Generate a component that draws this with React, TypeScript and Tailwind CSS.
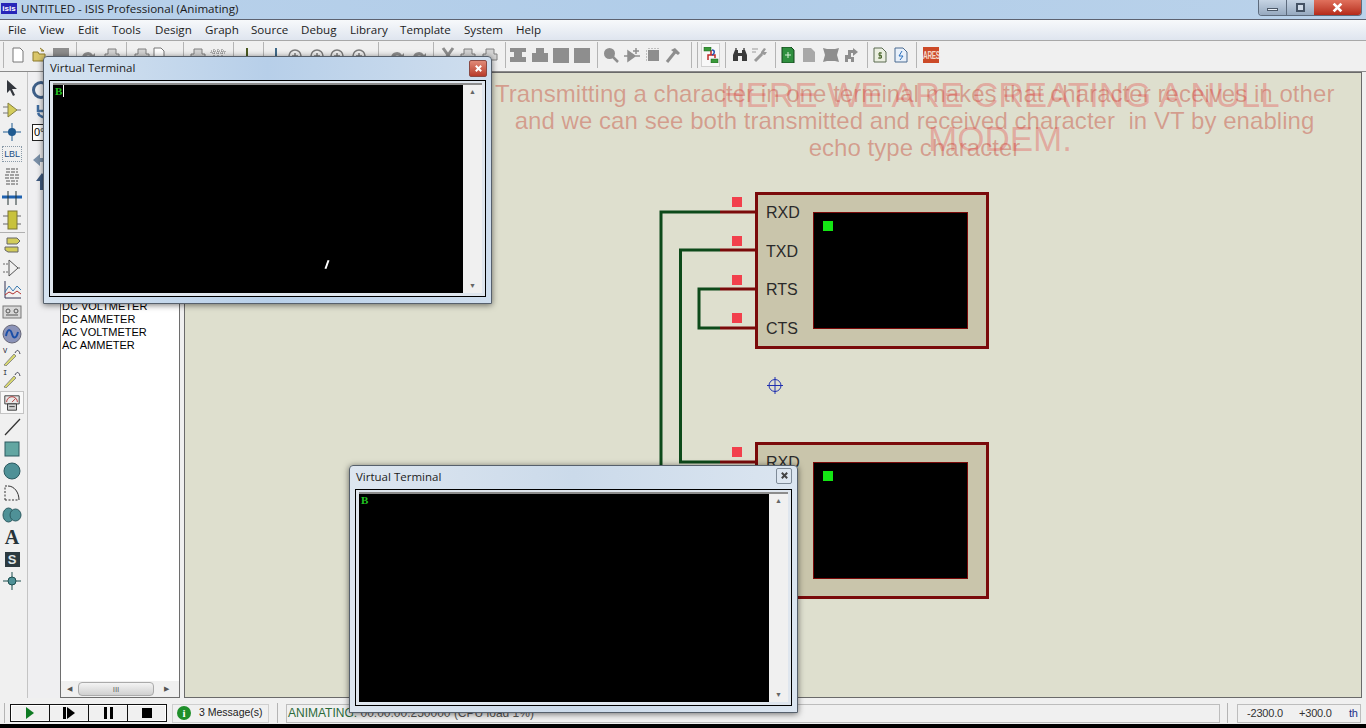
import React from 'react';

const menus: [string, string][] = [
  ['File', 'w-[31px]'],
  ['View', 'w-[39px]'],
  ['Edit', 'w-[34px]'],
  ['Tools', 'w-[43px]'],
  ['Design', 'w-[50px]'],
  ['Graph', 'w-[46px]'],
  ['Source', 'w-[50px]'],
  ['Debug', 'w-[49px]'],
  ['Library', 'w-[50px]'],
  ['Template', 'w-[64px]'],
  ['System', 'w-[52px]'],
  ['Help', 'w-[30px]'],
];

const Ico: React.FC<{ className?: string; children: React.ReactNode }> = ({ className = '', children }) => (
  <svg viewBox="0 0 16 16" className={`w-4 h-4 shrink-0 ${className}`}>
    {children}
  </svg>
);

const Sep: React.FC<{ className: string }> = ({ className }) => (
  <div className={`w-px h-[26px] shrink-0 bg-[#b4b4b4] ${className}`} />
);

const G = '#8e8e8e';

// small gray toolbar drawings
const Doc = () => <path d="M3 1h7l3 3v11H3z" fill="#fff" stroke="#777" />;
const Open = () => <path d="M1 5h5l1 2h6v7H1zM8 1l4 3h-3" fill="#d9c66a" stroke="#8c7a2c" />;
const Block = () => <rect x="0" y="1" width="16" height="15" fill={G} />;
const Ring = () => (
  <g fill="none" stroke="#7d7d7d" strokeWidth="1.5">
    <circle cx="8" cy="9" r="6" />
    <path d="M5 9h6M8 6v6" />
  </g>
);
const Swoosh = () => <path d="M2 10a6 6 0 0 1 11-2l2-2v6H9l2-2a4 4 0 0 0-7 2z" fill={G} />;
const Print = () => <path d="M4 2h8v5h3v6H1V7h3z" fill="#d4d4d4" stroke="#808080" />;
const Align1 = () => <path d="M0 1h16v4h-4v5h4v5H0v-5h4V5H0z" fill={G} />;
const Align2 = () => <path d="M4 1h8v5h4v9H0V6h4z" fill={G} />;

const TopTools: React.FC = () => (
  <div className="h-[31px] shrink-0 bg-[#f0f0f0] border-b border-[#8a8a8a] flex items-center pb-[2px]">
    <Sep className="ml-[3px]" />
    <Ico className="ml-[6px]"><Doc /></Ico>
    <Ico className="ml-[6px]"><Open /></Ico>
    <Ico className="ml-[5px]"><Block /></Ico>
    <Sep className="ml-[7px]" />
    <Ico className="ml-[3px]"><Swoosh /></Ico>
    <Ico className="ml-[8px]"><Print /></Ico>
    <Sep className="ml-[6px]" />
    <Ico className="ml-[7px]"><Print /></Ico>
    <Ico className="ml-[1px]"><Doc /></Ico>
    <Sep className="ml-[16px]" />
    <Ico className="ml-[6px]"><Print /></Ico>
    <Ico className="ml-[4px]"><path d="M1 4h14v2H1zM1 10h14v2H1zM4 2v12M8 2v12M12 2v12" stroke="#777" fill="none" strokeDasharray="1 1" /></Ico>
    <Sep className="ml-[7px]" />
    <Ico className="ml-[5px]"><path d="M8 1v9M2 10h12M1 14h14" stroke="#4a5a20" strokeWidth="2" fill="none" /></Ico>
    <Sep className="ml-[8px]" />
    <Ico className="ml-[4px]"><path d="M8 1v9M2 10h12M1 14h14" stroke="#3f6a8a" strokeWidth="2" fill="none" /></Ico>
    <Ico className="ml-[3px]"><Ring /></Ico>
    <Ico className="ml-[6px]"><Ring /></Ico>
    <Ico className="ml-[4px]"><Ring /></Ico>
    <Ico className="ml-[6px]"><Ring /></Ico>
    <Sep className="ml-[11px]" />
    <Ico className="ml-[10px]"><Swoosh /></Ico>
    <Ico className="ml-[6px]"><Swoosh /></Ico>
    <Sep className="ml-[6px]" />
    <Ico className="ml-[6px]"><path d="M3 1l10 14M13 1L3 15" stroke={G} strokeWidth="3" /></Ico>
    <Ico className="ml-[4px]"><Print /></Ico>
    <Ico className="ml-[6px]"><Print /></Ico>
    <Sep className="ml-[7px]" />
    <Ico className="ml-[4px]"><Align1 /></Ico>
    <Ico className="ml-[6px]"><Align2 /></Ico>
    <Ico className="ml-[5px]"><Block /></Ico>
    <Ico className="ml-[5px]"><Block /></Ico>
    <Sep className="ml-[7px]" />
    <Ico className="ml-[5px]">
      <circle cx="6.5" cy="6.5" r="5.5" fill={G} />
      <path d="M10 10l5 5" stroke={G} strokeWidth="2.5" />
    </Ico>
    <Ico className="ml-[5px]">
      <path d="M0 9h4M11 9h5M4 4l7 5-7 5zM12 1v6M9 4h6" stroke={G} strokeWidth="1.5" fill={G} />
    </Ico>
    <Ico className="ml-[5px]">
      <path d="M3 3h11v11H3z" fill={G} />
      <path d="M1 4h14M1 7h14M1 10h14M1 13h14M4 1v14M7 1v14M10 1v14M13 1v14" stroke={G} strokeDasharray="1 1" />
    </Ico>
    <Ico className="ml-[4px]">
      <path d="M2 15L10 5" stroke={G} strokeWidth="3" />
      <path d="M6 3l4-2 5 5-2 2-3-2z" fill={G} />
    </Ico>
    <Sep className="ml-[10px]" />
    <Sep className="ml-[5px]" />
    <div className="ml-[3px] w-[19px] h-[24px] shrink-0 flex items-center justify-center border border-[#d0d0d0] bg-[#f8f8f8]">
      <Ico>
        <path d="M8 3v5H5v5M8 8h4v3" stroke="#c02828" strokeWidth="1.5" fill="none" />
        <path d="M9 3c3 0 3 4 0 5" stroke="#2050b0" strokeWidth="1.5" fill="none" />
        <rect x="1" y="0" width="7" height="4" fill="#3a9a3a" stroke="#1c5a1c" strokeWidth=".5" />
        <rect x="8" y="12" width="7" height="4" fill="#3a9a3a" stroke="#1c5a1c" strokeWidth=".5" />
      </Ico>
    </div>
    <Sep className="ml-[5px]" />
    <Ico className="ml-[6px]">
      <path d="M1 8l2-5h3v11H1zM15 8l-2-5h-3v11h5zM6 6h4v3H6z" fill="#3a3a3a" />
      <path d="M3 3V1h2v2M11 3V1h2v2" fill="#777" />
    </Ico>
    <Ico className="ml-[4px]">
      <path d="M3 14l7-7" stroke="#9a9a9a" strokeWidth="3" />
      <path d="M9 5l3-4 2 1-2 3 3 0-2 3-4-1z" fill="#9a9a9a" />
      <path d="M0 2h6M0 5h4" stroke="#9a9a9a" />
    </Ico>
    <Sep className="ml-[7px]" />
    <Ico className="ml-[4px]">
      <path d="M2 0h9l3 3v13H2z" fill="#2f8f3f" stroke="#14451c" />
      <path d="M5 8h6M8 5v6" stroke="#d8f0d8" />
    </Ico>
    <Ico className="ml-[5px]"><path d="M2 1h8l4 4v10H2z" fill="#a8a8a8" /></Ico>
    <Ico className="ml-[6px]"><path d="M0 1l4 1h8l4-1-2 7 2 7-4-1H4l-4 1 2-7z" fill="#8e8e8e" /></Ico>
    <Ico className="ml-[5px]">
      <path d="M1 15V8h3V3h5V1l5 4-5 4V6H7v4h3v5H7v-3H4v3z" fill="#8e8e8e" />
    </Ico>
    <Sep className="ml-[7px]" />
    <Ico className="ml-[4px]">
      <path d="M2 1h8l4 4v10H2z" fill="#eaeee0" stroke="#5a6a50" />
      <path d="M10 6H7v2.500h2.500V11H6M8 5v7" stroke="#4f6a30" fill="none" />
    </Ico>
    <Ico className="ml-[5px]">
      <path d="M2 1h8l4 4v10H2z" fill="#e8f0fa" stroke="#4a6a90" />
      <path d="M9 4L6 9h4l-3 4" stroke="#2a70c0" fill="none" />
    </Ico>
    <Sep className="ml-[7px]" />
    <div className="ml-[6px] w-4 h-4 shrink-0 bg-[#cc4a28] text-[#f4d8c8] text-[6.5px] leading-4 tracking-[-0.3px] font-bold text-center font-['Liberation_Sans']">
      <span className="inline-block scale-y-[1.8]">ARES</span>
    </div>
  </div>
);

const Pencil: React.FC<{ label: string }> = ({ label }) => (
  <svg viewBox="0 0 20 20" className="w-5 h-5">
    <text x="1" y="7" fontSize="7" fontFamily="Liberation Mono" fill="#223">{label}</text>
    <path d="M2 19l10-11 2 2L4 20z" fill="#d8d870" stroke="#556" strokeWidth=".6" />
    <path d="M13 7c2-4 4-3 5 1" stroke="#445" fill="none" />
  </svg>
);

const LeftTools: React.FC = () => (
  <div className="w-[28px] shrink-0 border-r border-[#c4c4c4] flex flex-col items-center pt-[6px] pr-[3px] gap-[2px] bg-[#f0f0f0]">
    <svg viewBox="0 0 20 20" className="w-5 h-5"><path d="M5 2l10 9h-5l3 6-2 1-3-6-3 3z" fill="#33373d" /></svg>
    <svg viewBox="0 0 20 20" className="w-5 h-5"><path d="M6 3l9 7-9 7z" fill="#d4cd5c" stroke="#858040" /><path d="M1 7h5M1 13h5M15 10h4" stroke="#777" /></svg>
    <svg viewBox="0 0 20 20" className="w-5 h-5"><path d="M1 10h18M10 1v18" stroke="#1f5a90" /><circle cx="10" cy="10" r="4" fill="#1f5a90" /></svg>
    <div className="w-[20px] h-[16px] my-[2px] border border-dotted border-[#8a9aa8] text-[9px] leading-[14px] text-center text-[#1b4f86] font-['Liberation_Sans'] tracking-[-0.2px]">LBL</div>
    <svg viewBox="0 0 20 20" className="w-5 h-5"><path d="M4 3h12M4 6h12M3 9h14M3 12h14M4 15h12M4 18h12" stroke="#555" strokeDasharray="4 1" /></svg>
    <svg viewBox="0 0 20 20" className="w-5 h-5"><path d="M0 9h20" stroke="#1f62b0" strokeWidth="3" /><path d="M6 3v14M14 3v14" stroke="#233" /></svg>
    <svg viewBox="0 0 20 20" className="w-5 h-5"><rect x="6" y="1" width="9" height="18" fill="#c8c23c" stroke="#7a7430" /><path d="M1 6h5M1 14h5M15 6h4M15 14h4" stroke="#666" /></svg>
    <div className="w-[26px] h-px bg-[#b0b0b0] shrink-0" />
    <svg viewBox="0 0 20 20" className="w-5 h-5 mt-[1px]"><path d="M5 2h10l3 3-3 3H5zM3 11h13v5H6l-3-2z" fill="#d2cc5a" stroke="#666" /></svg>
    <svg viewBox="0 0 20 20" className="w-5 h-5"><path d="M7 2l9 8-9 8z" fill="none" stroke="#555" /><path d="M1 6h5M1 14h5M16 10h3" stroke="#666" strokeDasharray="2 1" /></svg>
    <svg viewBox="0 0 20 20" className="w-5 h-5"><path d="M3 1v17h16" stroke="#335" fill="none" /><path d="M3 12l4-6 4 5 4-5 4 4" stroke="#3a7ab0" fill="none" /><path d="M3 15l4-3 4 2 4-3 4 3" stroke="#b03030" fill="none" /></svg>
    <svg viewBox="0 0 20 20" className="w-5 h-5"><rect x="1" y="4" width="18" height="12" fill="#d8d8d8" stroke="#777" /><circle cx="6" cy="9" r="2" fill="none" stroke="#555" /><circle cx="14" cy="9" r="2" fill="none" stroke="#555" /><path d="M4 13h12" stroke="#555" /></svg>
    <svg viewBox="0 0 20 20" className="w-5 h-5"><circle cx="10" cy="10" r="9" fill="#8b93b8" stroke="#667" /><path d="M4 12c2-9 5-6 6-2s4 6 6-2" stroke="#1b4fa8" strokeWidth="2" fill="none" /></svg>
    <Pencil label="V" />
    <Pencil label="I" />
    <div className="w-[24px] h-[23px] mt-[1px] shrink-0 flex items-center justify-center border border-[#c4c4c4] bg-[#f8f8f8]">
      <svg viewBox="0 0 20 20" className="w-[18px] h-[18px]"><path d="M2 2h16v9H2z" fill="#e8e8e8" stroke="#333" /><path d="M4 9a6 6 0 0 1 12 0M10 9l4-4" stroke="#b03030" fill="none" /><path d="M5 11h10v7H5z" fill="#cfcfcf" stroke="#333" /><path d="M7 14h6" stroke="#333" /></svg>
    </div>
    <svg viewBox="0 0 20 20" className="w-5 h-5 mt-[1px]"><path d="M3 18L18 2" stroke="#333" strokeWidth="1.2" /></svg>
    <svg viewBox="0 0 20 20" className="w-5 h-5"><rect x="3" y="3" width="14" height="14" fill="#62a6a2" stroke="#2c5a60" /></svg>
    <svg viewBox="0 0 20 20" className="w-5 h-5"><circle cx="10" cy="10" r="8" fill="#4f9197" stroke="#2c5a60" /></svg>
    <svg viewBox="0 0 20 20" className="w-5 h-5"><path d="M3 17V3h3M3 17h14" fill="none" stroke="#333" strokeDasharray="2 1.500" /><path d="M6 3c6 0 11 6 11 14" stroke="#333" fill="none" /></svg>
    <svg viewBox="0 0 20 20" className="w-5 h-5"><ellipse cx="6.500" cy="10" rx="5.500" ry="7" fill="#4f9197" stroke="#2c5a60" /><ellipse cx="13.500" cy="10" rx="5.500" ry="6" fill="#4f9197" stroke="#2c5a60" /></svg>
    <div className="w-5 h-5 text-[20px] leading-5 text-center font-bold text-[#26343a] font-['Liberation_Serif']">A</div>
    <div className="w-[15px] h-[15px] my-[2.5px] bg-[#2c3a40] text-[#e0e8e8] text-[13px] leading-[15px] font-bold text-center font-['Liberation_Sans']">S</div>
    <svg viewBox="0 0 20 20" className="w-5 h-5"><path d="M1 10h18M10 1v18" stroke="#1c4f4f" /><circle cx="10" cy="10" r="4" fill="#4f9197" stroke="#1c4f4f" /></svg>
  </div>
);

const SubTools: React.FC = () => (
  <div className="w-[32px] shrink-0 flex flex-col items-start pl-[4px] pt-[9px] bg-[#efeff1]">
    <div className="w-[18px] h-[18px] rounded-full border-[3px] border-[#3e5f88]" />
    <svg viewBox="0 0 20 20" className="w-5 h-5 mt-[3px]"><path d="M15 4a6 6 0 1 1-9 7M6 3v6h6" stroke="#3f6ca0" strokeWidth="2.500" fill="none" /></svg>
    <div className="mt-[2px] w-[30px] h-[17px] border border-[#222] bg-white text-[11px] leading-[15px] pl-[1px] font-['Liberation_Sans'] text-black">0°</div>
    <svg viewBox="0 0 20 20" className="w-5 h-5 mt-[9px]"><path d="M1 10l7-6v4h10v4H8v4z" fill="#7a90a8" /></svg>
    <svg viewBox="0 0 20 20" className="w-5 h-5 mt-[2px]"><path d="M10 1l6 8h-4v9H8V9H4z" fill="#3e5a80" /></svg>
  </div>
);

const PartList: React.FC = () => (
  <div className="w-[120px] shrink-0 border border-[#6e6e6e] bg-white flex flex-col">
    <div className="flex-1 pt-[227px] pl-[1px] text-[11px] leading-[13px] text-black font-['Liberation_Sans']">
      <div>DC VOLTMETER</div>
      <div>DC AMMETER</div>
      <div>AC VOLTMETER</div>
      <div>AC AMMETER</div>
    </div>
    <div className="h-[16px] bg-[#f0f0f0] flex items-center text-[#555]">
      <span className="w-[17px] text-center text-[7px]">◀</span>
      <div className="w-[76px] h-[14px] border border-[#aaa] rounded-sm bg-gradient-to-b from-[#f4f4f4] to-[#d0d0d0] text-[8px] leading-[12px] text-center">III</div>
      <span className="flex-1 text-center text-[7px]">▶</span>
    </div>
  </div>
);

const Unit: React.FC<{ className: string }> = ({ className }) => (
  <div className={`absolute w-[234px] h-[157px] border-[3px] border-[#7a0a0a] bg-[#c9c5ab] flex ${className}`}>
    <div className="w-[55px] pl-[8px] pt-[8px] flex flex-col gap-[18.67px] text-[16px] leading-[20px] text-[#2a2a2a] font-['Liberation_Sans']">
      <span>RXD</span>
      <span>TXD</span>
      <span>RTS</span>
      <span>CTS</span>
    </div>
    <div className="mt-[17px] w-[155px] h-[117px] bg-black border border-[#7a0a0a] pl-[9px] pt-[8px]">
      <div className="w-[10px] h-[10px] bg-[#14e614]" />
    </div>
  </div>
);

const CloseMark: React.FC<{ color: string }> = ({ color }) => (
  <svg viewBox="0 0 10 10" className="w-[9px] h-[9px]">
    <path d="M2 2l6 6M8 2l-6 6" stroke={color} strokeWidth="2.200" />
  </svg>
);

const VirtualTerminal: React.FC<{ className: string; active?: boolean }> = ({ className, active }) => (
  <div
    className={`absolute w-[449px] h-[248px] flex flex-col px-[5px] pb-[6px] border border-[#56606c] rounded-t-[4px] shadow-[0_1px_6px_rgba(0,0,0,0.55)] ${
      active ? 'bg-gradient-to-r from-[#d6e3f0] via-[#b7cfe9] to-[#cfdeee]' : 'bg-gradient-to-r from-[#dde6f0] via-[#cbdaea] to-[#dbe5f0]'
    } ${className}`}
  >
    <div className="h-[23px] shrink-0 flex items-center justify-between font-['Open_Sans'] text-[11.5px] text-[#1c1c1c] pl-[1px] pb-[1px]">
      <span>Virtual Terminal</span>
      {active ? (
        <div className="w-[18px] h-[17px] mt-[1px] mr-[-1px] rounded-[2px] border border-[#8a4a44] bg-gradient-to-b from-[#e08a78] to-[#b83a2a] flex items-center justify-center">
          <CloseMark color="#fff" />
        </div>
      ) : (
        <div className="w-[16px] h-[16px] mt-[-3px] rounded-[2px] border border-[#7f8b98] bg-[#dde6f0] flex items-center justify-center">
          <CloseMark color="#444" />
        </div>
      )}
    </div>
    <div className="flex-1 min-h-0 border border-black bg-[#dfe6ee] px-[3px] pt-[2px] pb-[3px] flex">
      <div className="flex-1 flex border-t-[2px] border-[#8c8c8c] bg-[#f0f0f0] min-w-0">
        <div className="relative w-[410px] bg-black pl-[2px] font-['Liberation_Serif'] font-bold text-[11px] leading-[13px] text-[#22c422]">
          <span>B</span>
          {active && <span className="inline-block w-px h-[12px] bg-white ml-[1px] align-top" />}
        </div>
        <div className="flex-1 flex flex-col items-center justify-between py-[2px] text-[#666] text-[7px] leading-[10px]">
          <span>▲</span>
          <span>▼</span>
        </div>
      </div>
    </div>
  </div>
);

const App: React.FC = () => {
  return (
    <div className="relative w-[1366px] h-[728px] overflow-hidden bg-[#f0f0f0] flex flex-col font-['Open_Sans']">
      {/* title bar */}
      <div className="h-[19px] shrink-0 bg-gradient-to-r from-[#b9d1ea] via-[#b1cde9] to-[#bad2ea] flex items-start justify-between">
        <div className="flex items-center h-[17px]">
          <div className="ml-[1px] w-[16px] h-[11px] bg-[#2626b8] text-white text-[8px] leading-[11px] text-center font-bold font-['Liberation_Sans']">isis</div>
          <span className="ml-[4px] text-[11.6px] text-[#1a1a1a]">UNTITLED - ISIS Professional (Animating)</span>
        </div>
        <div className="flex h-[16px] mr-[4px] border border-t-0 border-[#5d6b7d] rounded-b-[4px] overflow-hidden">
          <div className="w-[28px] bg-gradient-to-b from-[#c6d4e4] to-[#96a9bf] flex items-center justify-center border-r border-[#5d6b7d]">
            <div className="w-[11px] h-[3px] mt-[4px] bg-[#e8eef5] border border-[#4b5868]" />
          </div>
          <div className="w-[27px] bg-gradient-to-b from-[#c6d4e4] to-[#96a9bf] flex items-center justify-center">
            <div className="w-[9px] h-[9px] border-2 border-[#445264] bg-[#d0dbe8]" />
          </div>
          <div className="w-[47px] bg-gradient-to-b from-[#e0705c] to-[#b52a1a] flex items-center justify-center">
            <svg viewBox="0 0 10 10" className="w-[11px] h-[11px]"><path d="M1.500 1.500l7 7M8.500 1.500l-7 7" stroke="#fff" strokeWidth="2.500" /></svg>
          </div>
        </div>
      </div>

      {/* menu */}
      <div className="h-[22px] shrink-0 border-t border-[#5d6270] border-b border-b-[#a8a8a8] bg-gradient-to-b from-[#f7f9fb] to-[#dfe5ef] flex items-center pl-[8px] text-[11.6px] text-[#1c1c1c]">
        {menus.map(([label, w]) => (
          <span key={label} className={w}>{label}</span>
        ))}
      </div>

      <TopTools />

      {/* main */}
      <div className="flex-1 min-h-0 flex">
        <LeftTools />
        <SubTools />
        <PartList />
        <div className="w-[4px] shrink-0" />
        <div className="relative w-[1178px] shrink-0 bg-[#dedfce] border border-[#6a6a6a] overflow-hidden">
          <svg viewBox="185 73 1176 624" className="absolute left-0 top-0 w-[1176px] h-[624px]">
            <g fill="none" strokeWidth="3">
              <path d="M756 212H720" stroke="#7a0a0a" />
              <path d="M720 212H661V480" stroke="#0d4a1a" />
              <path d="M756 250H720" stroke="#7a0a0a" />
              <path d="M720 250H680.500V462H720" stroke="#0d4a1a" />
              <path d="M720 462H756" stroke="#7a0a0a" />
              <path d="M756 289H720M756 328H720" stroke="#7a0a0a" />
              <path d="M720 289H699V328H720" stroke="#0d4a1a" />
            </g>
            <g fill="#f2404c">
              <rect x="732" y="197" width="10" height="10" />
              <rect x="732" y="236" width="10" height="10" />
              <rect x="732" y="275" width="10" height="10" />
              <rect x="732" y="313" width="10" height="10" />
              <rect x="732" y="447" width="10" height="10" />
            </g>
            <g fill="none" stroke="#2030b0">
              <circle cx="775" cy="385.500" r="6" />
              <path d="M767 385.500H783M775 377V394" />
            </g>
          </svg>
          <Unit className="left-[570px] top-[119px]" />
          <Unit className="left-[570px] top-[369px]" />
          <div className="absolute left-[310px] top-[7px] w-[839px] text-center whitespace-pre text-[24px] leading-[27px] tracking-[0.05px] text-[#c02010]/35 font-['Liberation_Sans']">
            {'Transmitting a character in one terminal makes that character receives in other\nand we can see both transmitted and received character  in VT by enabling\necho type character'}
          </div>
          <div className="absolute left-[500px] top-0 w-[630px] text-center whitespace-pre text-[35px] leading-[44px] text-[#e8282c]/30 font-['Liberation_Sans']">
            {'HERE WE ARE CREATING A NULL\nMODEM.'}
          </div>
        </div>
        <div className="flex-1" />
      </div>

      {/* status bar */}
      <div className="h-[26px] shrink-0 bg-[#f0f0f0] flex items-center pt-[4px] text-[12px] text-[#222]">
        <div className="ml-[4px] w-px h-[20px] bg-[#b4b4b4]" />
        <div className="ml-[5px] flex h-[18px] border border-[#111] shadow-[inset_0_0_0_1px_#fff]">
          <div className="w-[39px] flex items-center justify-center border-r border-[#111]">
            <div className="border-y-[6px] border-y-transparent border-l-[8px] border-l-[#0e7a22]" />
          </div>
          <div className="w-[39px] flex items-center justify-center border-r border-[#111] gap-[1px]">
            <div className="w-[3px] h-[12px] bg-black" />
            <div className="border-y-[6px] border-y-transparent border-l-[8px] border-l-black" />
          </div>
          <div className="w-[39px] flex items-center justify-center border-r border-[#111] gap-[3px]">
            <div className="w-[3px] h-[12px] bg-black" />
            <div className="w-[3px] h-[12px] bg-black" />
          </div>
          <div className="w-[38px] flex items-center justify-center">
            <div className="w-[10px] h-[10px] bg-black" />
          </div>
        </div>
        <div className="ml-[5px] w-[97px] h-[19px] shrink-0 border border-[#cfcfcf] flex items-center pl-[4px]">
          <div className="w-[14px] h-[14px] shrink-0 rounded-full bg-[#1f8f2a] text-white text-[11px] leading-[14px] text-center font-bold font-['Liberation_Serif']">i</div>
          <span className="ml-[8px] text-[10.5px] whitespace-nowrap font-['Liberation_Sans']">3 Message(s)</span>
        </div>
        <div className="ml-[8px] w-px h-[20px] shrink-0 bg-[#b4b4b4]" />
        <div className="ml-[8px] w-[934px] h-[19px] shrink-0 border border-[#bdbdbd] pl-[1px] leading-[17px] font-['Liberation_Sans'] text-[#2a6a3a] whitespace-nowrap">
          ANIMATING: <span className="text-[#555]">00:00:00.250000 (CPU load 1%)</span>
        </div>
        <div className="ml-[7px] w-px h-[20px] shrink-0 bg-[#b4b4b4]" />
        <div className="ml-[9px] w-[124px] h-[19px] shrink-0 border border-[#bdbdbd] flex items-center font-['Liberation_Sans'] text-[11px] tracking-[-0.2px] text-[#333]">
          <span className="ml-[9px] w-[52px]">-2300.0</span>
          <span className="w-[50px]">+300.0</span>
          <span className="text-[#22308a]">th</span>
        </div>
      </div>
      <div className="h-[4px] shrink-0 bg-black" />

      <VirtualTerminal active className="left-[43px] top-[56px]" />
      <VirtualTerminal className="left-[349px] top-[465px]" />

      {/* mouse cursor */}
      <div className="absolute left-[326px] top-[260px] w-[2px] h-[9px] bg-white rotate-[20deg]" />
    </div>
  );
};

export default App;
